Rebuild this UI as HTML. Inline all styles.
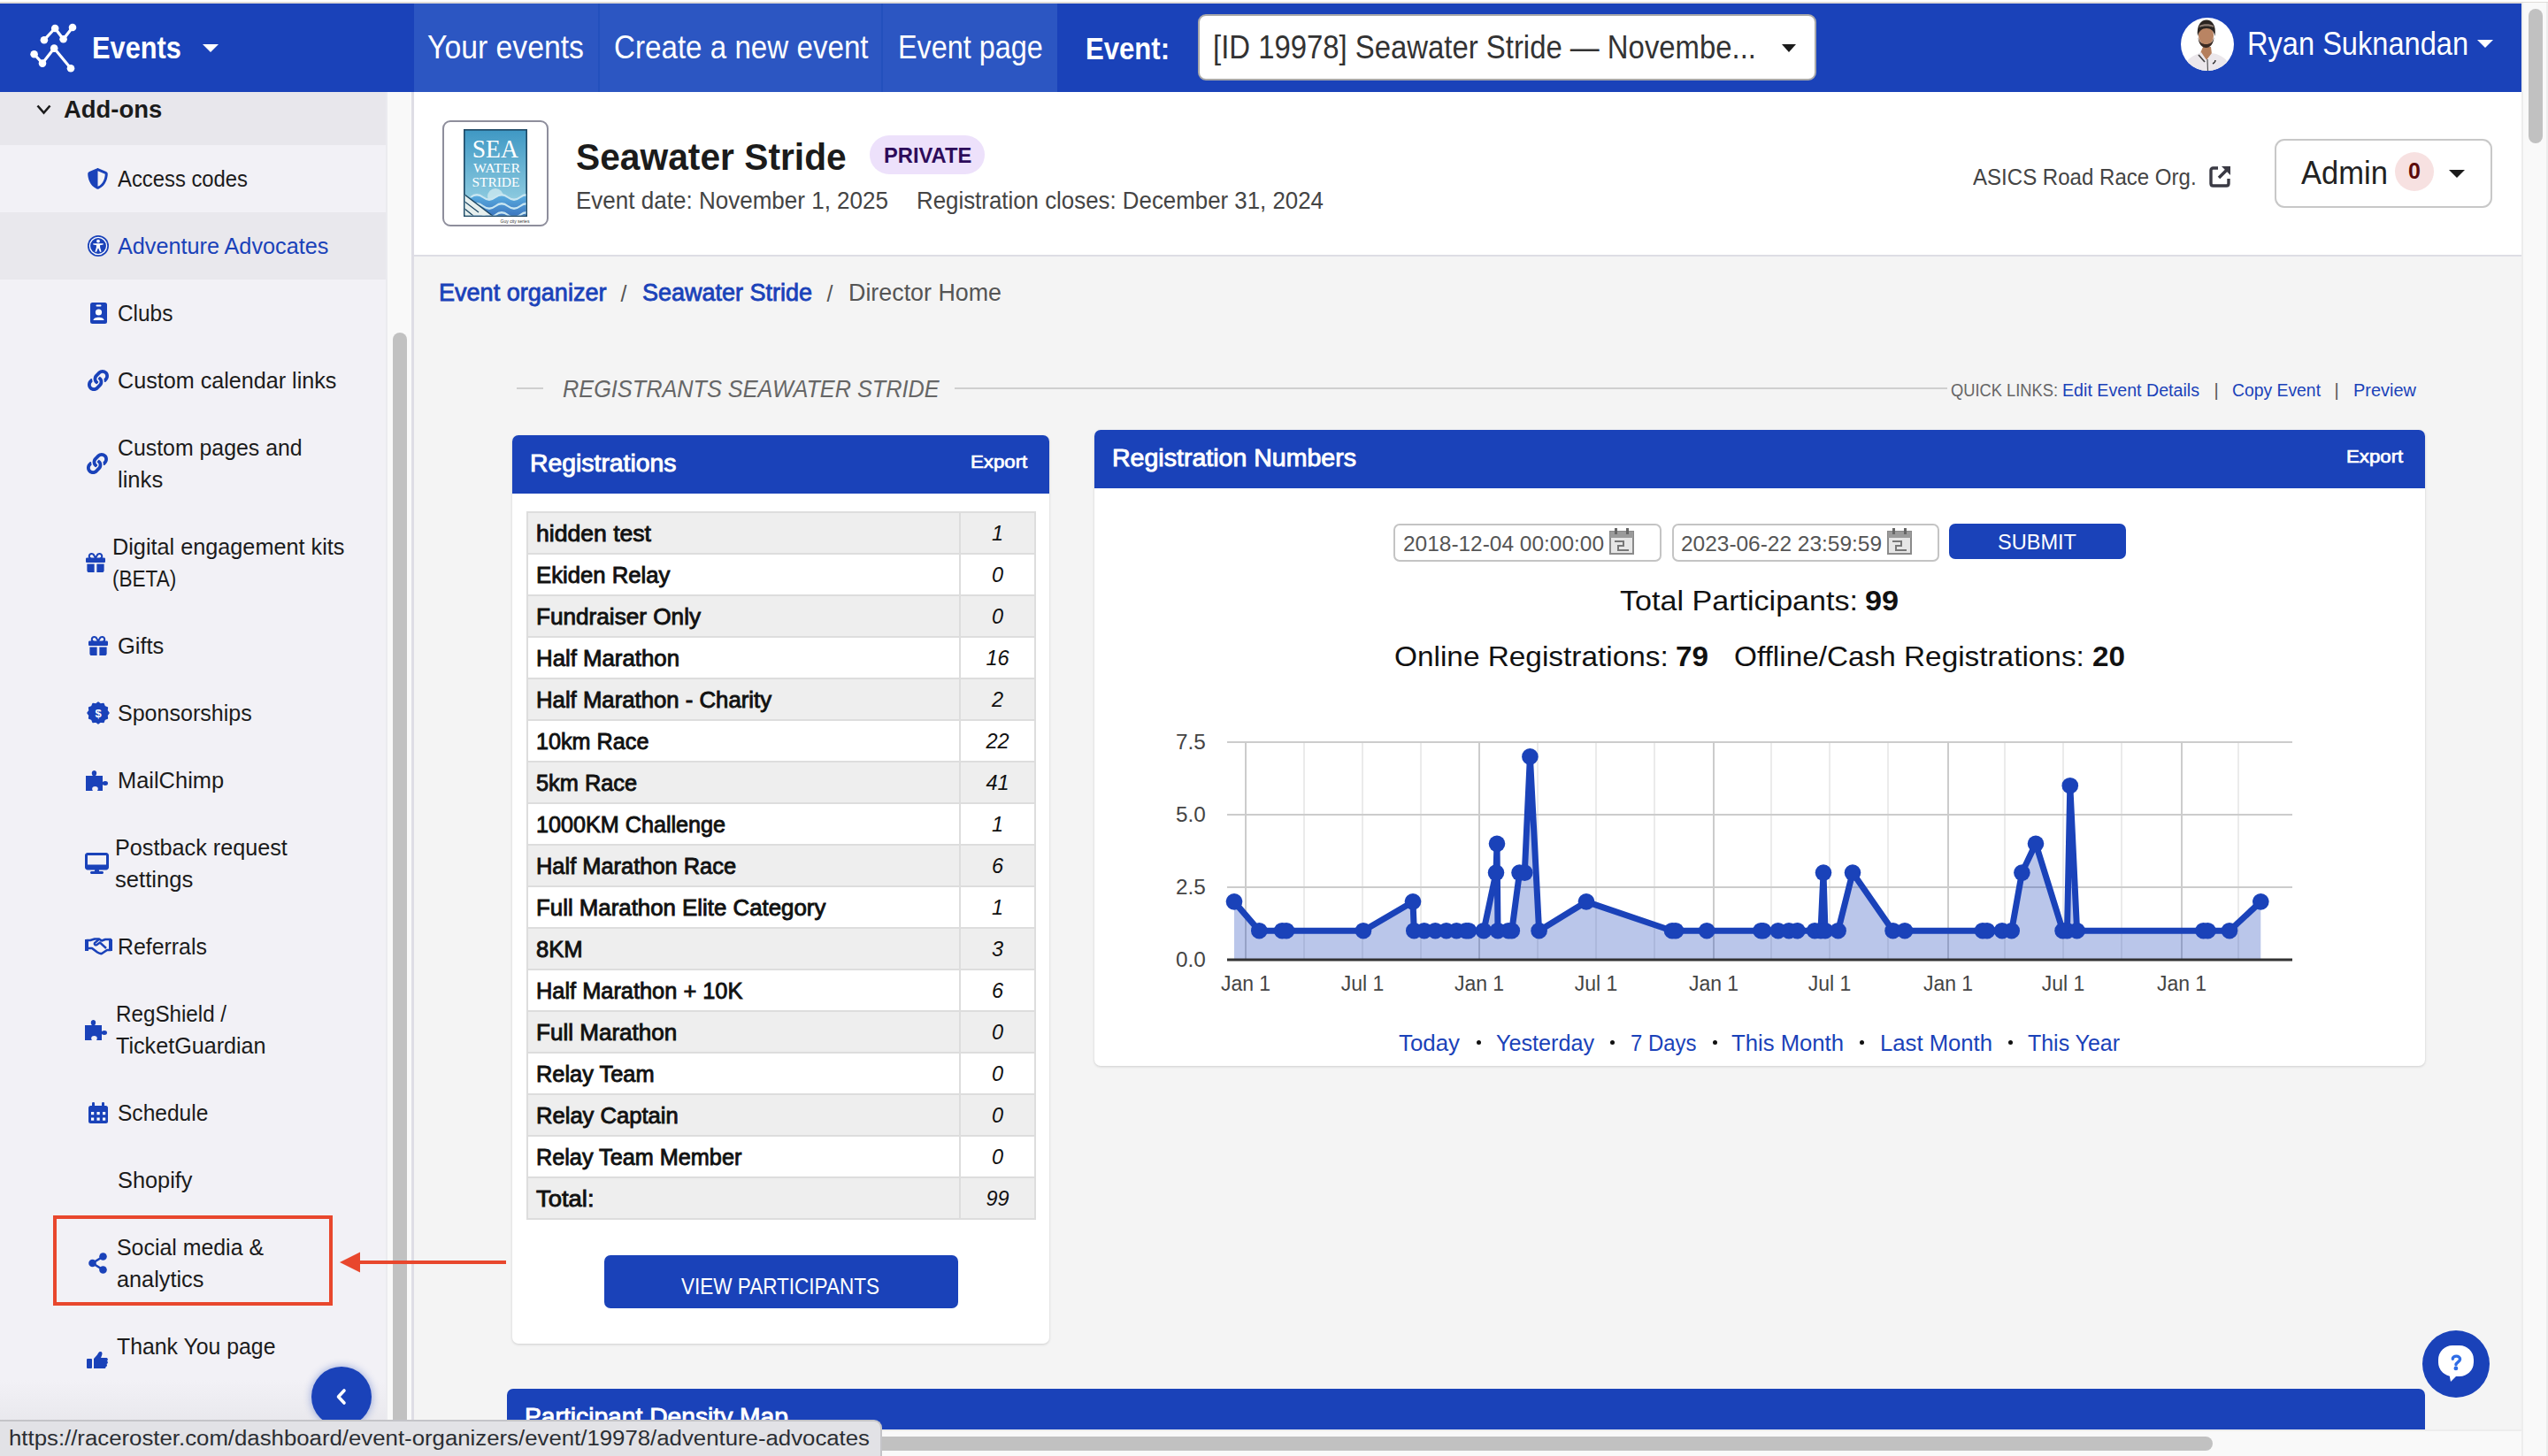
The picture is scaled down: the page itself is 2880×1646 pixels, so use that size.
<!DOCTYPE html>
<html><head><meta charset="utf-8">
<style>
*{box-sizing:border-box;margin:0;padding:0}
html,body{width:2880px;height:1646px;overflow:hidden;background:#f4f4f4;font-family:"Liberation Sans",sans-serif;color:#1b1b1b}
.a{position:absolute;white-space:nowrap}
svg{position:absolute;overflow:visible}
</style></head>
<body>
<div class="a" style="left:0px;top:0px;width:2880px;height:4px;background:#fff;border-bottom:2px solid #e0dcd8;"></div>
<div class="a" style="left:0px;top:4px;width:2850px;height:100px;background:#1a42b9;"></div>
<div class="a" style="left:468px;top:4px;width:727px;height:100px;background:#2c56c2;"></div>
<div class="a" style="left:676px;top:4px;width:2px;height:100px;background:#2350bd;"></div>
<div class="a" style="left:996px;top:4px;width:2px;height:100px;background:#2350bd;"></div>
<div class="a" style="left:2850px;top:3px;width:30px;height:1643px;background:#f9f9f9;border-left:2px solid #ededed;border-right:2px solid #ececec;"></div>
<div class="a" style="left:2858px;top:10px;width:16px;height:152px;background:#c1c1c1;border-radius:8px;"></div>
<div class="a" style="left:0px;top:104px;width:436px;height:1501px;background:#f2f1f6;"></div>
<div class="a" style="left:0px;top:104px;width:436px;height:60px;background:#e8e7ec;"></div>
<div class="a" style="left:0px;top:240px;width:436px;height:76px;background:#e9e8ed;"></div>
<div class="a" style="left:436px;top:104px;width:32px;height:1512px;background:#f9f9f9;border-right:3px solid #dedde5;border-left:2px solid #ebebef;"></div>
<div class="a" style="left:444px;top:376px;width:16px;height:1260px;background:#c1c1c1;border-radius:8px;"></div>
<svg style="left:0;top:0" width="120" height="104">
<g stroke="#fff" stroke-width="3.2" fill="none" stroke-linecap="round">
<polyline points="49.9,45.2 62.2,32 71.6,44.3 82,31"/>
<polyline points="38.6,61.2 48,71.6 61.2,54.6 80,77.2"/>
</g>
<g fill="#fff">
<circle cx="49.9" cy="45.2" r="4.3"/><circle cx="62.2" cy="32" r="4.3"/><circle cx="71.6" cy="44.3" r="4.3"/><circle cx="82" cy="31" r="4.3"/>
<circle cx="38.6" cy="61.2" r="4.3"/><circle cx="48" cy="71.6" r="4.3"/><circle cx="61.2" cy="54.6" r="4.3"/><circle cx="80" cy="77.2" r="4.3"/>
</g></svg>
<div class="a" style="left:103.6px;top:37.3px;font-size:34.5px;line-height:34.5px;color:#fff;font-weight:bold;transform:scaleX(0.8919);transform-origin:0 0;">Events</div>
<svg style="left:229px;top:50px" width="19" height="10"><polygon points="0,0 18,0 9,9" fill="#fff"/></svg>
<div class="a" style="left:483.0px;top:35.9px;font-size:36px;line-height:36px;color:#fff;transform:scaleX(0.9374);transform-origin:0 0;">Your events</div>
<div class="a" style="left:694.0px;top:35.9px;font-size:36px;line-height:36px;color:#fff;transform:scaleX(0.9212);transform-origin:0 0;">Create a new event</div>
<div class="a" style="left:1015.0px;top:35.9px;font-size:36px;line-height:36px;color:#fff;transform:scaleX(0.8992);transform-origin:0 0;">Event page</div>
<div class="a" style="left:1227.0px;top:36.8px;font-size:35px;line-height:35px;color:#fff;font-weight:bold;transform:scaleX(0.8882);transform-origin:0 0;">Event:</div>
<div class="a" style="left:1354px;top:16px;width:699px;height:75px;background:#fff;border:2px solid #a9a9a9;border-radius:9px;"></div>
<div class="a" style="left:1371.0px;top:35.9px;font-size:36px;line-height:36px;color:#333;transform:scaleX(0.9132);transform-origin:0 0;">[ID 19978] Seawater Stride — Novembe...</div>
<svg style="left:2014px;top:50px" width="17" height="10"><polygon points="0,0 16,0 8,9" fill="#1b1b1b"/></svg>
<svg style="left:2465px;top:20px" width="60" height="60">
<defs><clipPath id="av"><circle cx="30" cy="30" r="30"/></clipPath></defs>
<circle cx="30" cy="30" r="30" fill="#fff"/>
<g clip-path="url(#av)">
<path d="M22,40 L29,48 L35,41 L34,33 L25,33Z" fill="#b57f5c"/>
<path d="M3,62 C4,50 10,44 19,41 L23,39 L29,48 L35,40 L40,41 C49,44 56,50 57,62Z" fill="#ebe7eb"/>
<ellipse cx="28.5" cy="20" rx="8.6" ry="11" fill="#b98463"/>
<path d="M19.5,22 C20,30 24,34 28.5,34 C33,34 37,30 37.5,22 C36,28 33,30 28.5,30 C24,30 21,28 19.5,22Z" fill="#3a2a22"/>
<path d="M19,21 C17.5,8 23,2.5 29,2.5 C35,2.5 40.5,8 38.5,21 C37.5,15 34,12 29,12 C24,12 20.5,15 19,21Z" fill="#2a2420"/>
<path d="M21,9 C25,6.5 33,6.5 37,9 L37,11 C33,9 25,9 21,11Z" fill="#8a7a70"/>
<path d="M20,42 L27,50" stroke="#444" stroke-width="1.6"/>
<path d="M30,47 L30.5,60" stroke="#555" stroke-width="1.2"/>
<path d="M36,52 C38,51 39,49 39,48" stroke="#333" stroke-width="1.4" fill="none"/>
</g></svg>
<div class="a" style="left:2540.0px;top:31.5px;font-size:36px;line-height:36px;color:#fff;transform:scaleX(0.9052);transform-origin:0 0;">Ryan Suknandan</div>
<svg style="left:2800px;top:45px" width="19" height="10"><polygon points="0,0 18,0 9,9" fill="#fff"/></svg>
<svg style="left:41px;top:118px" width="18" height="12"><polyline points="1.5,1.5 8.5,9.5 15.5,1.5" fill="none" stroke="#1b1b1b" stroke-width="2.6"/></svg>
<div class="a" style="left:71.5px;top:110.3px;font-size:28px;line-height:28px;color:#1b1b1b;font-weight:bold;transform:scaleX(0.9803);transform-origin:0 0;">Add-ons</div>
<div class="a" style="left:133.0px;top:190.4px;font-size:25.5px;line-height:25.5px;color:#1b1b1b;transform:scaleX(0.9345);transform-origin:0 0;">Access codes</div>
<div class="a" style="left:133.0px;top:266.4px;font-size:25.5px;line-height:25.5px;color:#1a42b9;transform:scaleX(0.9888);transform-origin:0 0;">Adventure Advocates</div>
<div class="a" style="left:133.0px;top:342.4px;font-size:25.5px;line-height:25.5px;color:#1b1b1b;transform:scaleX(0.9570);transform-origin:0 0;">Clubs</div>
<div class="a" style="left:133.0px;top:418.4px;font-size:25.5px;line-height:25.5px;color:#1b1b1b;transform:scaleX(0.9863);transform-origin:0 0;">Custom calendar links</div>
<div class="a" style="left:132.5px;top:494.4px;font-size:25.5px;line-height:25.5px;color:#1b1b1b;transform:scaleX(0.9746);transform-origin:0 0;">Custom pages and</div>
<div class="a" style="left:132.5px;top:530.0px;font-size:25.5px;line-height:25.5px;color:#1b1b1b;transform:scaleX(1.0034);transform-origin:0 0;">links</div>
<div class="a" style="left:127.3px;top:606.4px;font-size:25.5px;line-height:25.5px;color:#1b1b1b;transform:scaleX(0.9899);transform-origin:0 0;">Digital engagement kits</div>
<div class="a" style="left:127.3px;top:642.0px;font-size:25.5px;line-height:25.5px;color:#1b1b1b;transform:scaleX(0.8849);transform-origin:0 0;">(BETA)</div>
<div class="a" style="left:133.0px;top:718.4px;font-size:25.5px;line-height:25.5px;color:#1b1b1b;transform:scaleX(0.9976);transform-origin:0 0;">Gifts</div>
<div class="a" style="left:133.0px;top:794.4px;font-size:25.5px;line-height:25.5px;color:#1b1b1b;transform:scaleX(0.9818);transform-origin:0 0;">Sponsorships</div>
<div class="a" style="left:133.0px;top:870.4px;font-size:25.5px;line-height:25.5px;color:#1b1b1b;transform:scaleX(0.9972);transform-origin:0 0;">MailChimp</div>
<div class="a" style="left:130.3px;top:946.4px;font-size:25.5px;line-height:25.5px;color:#1b1b1b;transform:scaleX(0.9891);transform-origin:0 0;">Postback request</div>
<div class="a" style="left:130.3px;top:982.0px;font-size:25.5px;line-height:25.5px;color:#1b1b1b;transform:scaleX(1.0049);transform-origin:0 0;">settings</div>
<div class="a" style="left:133.0px;top:1058.4px;font-size:25.5px;line-height:25.5px;color:#1b1b1b;transform:scaleX(0.9753);transform-origin:0 0;">Referrals</div>
<div class="a" style="left:130.9px;top:1134.4px;font-size:25.5px;line-height:25.5px;color:#1b1b1b;transform:scaleX(0.9489);transform-origin:0 0;">RegShield /</div>
<div class="a" style="left:130.9px;top:1170.0px;font-size:25.5px;line-height:25.5px;color:#1b1b1b;transform:scaleX(0.9862);transform-origin:0 0;">TicketGuardian</div>
<div class="a" style="left:133.0px;top:1246.4px;font-size:25.5px;line-height:25.5px;color:#1b1b1b;transform:scaleX(0.9621);transform-origin:0 0;">Schedule</div>
<div class="a" style="left:133.0px;top:1322.4px;font-size:25.5px;line-height:25.5px;color:#1b1b1b;transform:scaleX(0.9936);transform-origin:0 0;">Shopify</div>
<div class="a" style="left:132.0px;top:1398.4px;font-size:25.5px;line-height:25.5px;color:#1b1b1b;transform:scaleX(0.9760);transform-origin:0 0;">Social media &amp;</div>
<div class="a" style="left:132.0px;top:1434.0px;font-size:25.5px;line-height:25.5px;color:#1b1b1b;transform:scaleX(0.9907);transform-origin:0 0;">analytics</div>
<div class="a" style="left:131.6px;top:1510.4px;font-size:25.5px;line-height:25.5px;color:#1b1b1b;transform:scaleX(0.9737);transform-origin:0 0;">Thank You page</div>
<svg style="left:99px;top:190px" width="23" height="24" viewBox="16 0 480 512"><path fill="#1a42b9" d="M256 0c4.6 0 9.2 1 13.4 2.9L457.7 82.8c22 9.3 38.4 31 38.3 57.2c-.5 99.2-41.3 280.7-213.6 363.2c-16.7 8-36.1 8-52.8 0C57.3 420.7 16.5 239.2 16 140c-.1-26.2 16.3-47.9 38.3-57.2L242.7 2.9C246.8 1 251.4 0 256 0zm0 66.8V444.8C394 378 431.1 230.1 432 141.4L256 66.8z"/></svg>
<svg style="left:99px;top:266px" width="24" height="24" viewBox="0 0 24 24"><circle cx="12" cy="12" r="12" fill="#1a42b9"/><circle cx="12" cy="12" r="9.6" fill="none" stroke="#fff" stroke-width="1.3"/><circle cx="12" cy="6.6" r="1.9" fill="#fff"/><path d="M6.3 9.2 L17.7 9.2 L17.7 10.6 L14 11.3 L14.2 14 L15.6 18.6 L14 19.1 L12.3 14.8 L11.7 14.8 L10 19.1 L8.4 18.6 L9.8 14 L10 11.3 L6.3 10.6Z" fill="#fff"/></svg>
<svg style="left:101.5px;top:342px" width="19" height="24" viewBox="0 0 19 24"><rect x="0" y="0" width="19" height="24" rx="2.5" fill="#1a42b9"/><rect x="6.5" y="2.5" width="6" height="2" rx="1" fill="#fff"/><circle cx="9.5" cy="11" r="3.6" fill="#fff"/><path d="M3.5 20 C3.5 15.5 15.5 15.5 15.5 20Z" fill="#fff"/></svg>
<svg style="left:99px;top:418px" width="24" height="24" viewBox="0 0 512 512"><path fill="#1a42b9" d="M326.612 185.391c59.747 59.809 58.927 155.698.36 214.59-.11.12-.24.25-.36.37l-67.2 67.2c-59.27 59.27-155.699 59.262-214.96 0-59.27-59.26-59.27-155.7 0-214.96l37.106-37.106c9.84-9.84 26.786-3.3 27.294 10.606.648 17.722 3.826 35.527 9.69 52.721 1.986 5.822.567 12.262-3.783 16.612l-13.087 13.087c-28.026 28.026-28.905 73.66-1.155 101.96 28.024 28.579 74.086 28.749 102.325.51l67.2-67.19c28.191-28.191 28.073-73.757 0-101.83-3.701-3.694-7.429-6.564-10.341-8.569a16.037 16.037 0 0 1-6.947-12.606c-.396-10.567 3.348-21.456 11.698-29.806l21.054-21.055c5.521-5.521 14.182-6.199 20.584-1.731a152.482 152.482 0 0 1 20.522 17.197zM467.547 44.449c-59.261-59.262-155.69-59.27-214.96 0l-67.2 67.2c-.12.12-.25.25-.36.37-58.566 58.892-59.387 154.781.36 214.59a152.454 152.454 0 0 0 20.521 17.196c6.402 4.468 15.064 3.789 20.584-1.731l21.054-21.055c8.35-8.35 12.094-19.239 11.698-29.806a16.037 16.037 0 0 0-6.947-12.606c-2.912-2.005-6.64-4.875-10.341-8.569-28.073-28.073-28.191-73.639 0-101.83l67.2-67.19c28.239-28.239 74.3-28.069 102.325.51 27.75 28.3 26.872 73.934-1.155 101.96l-13.087 13.087c-4.35 4.35-5.769 10.79-3.783 16.612 5.864 17.194 9.042 34.999 9.69 52.721.509 13.906 17.454 20.446 27.294 10.606l37.106-37.106c59.271-59.259 59.271-155.699.001-214.959z"/></svg>
<svg style="left:98px;top:512px" width="24" height="24" viewBox="0 0 512 512"><path fill="#1a42b9" d="M326.612 185.391c59.747 59.809 58.927 155.698.36 214.59-.11.12-.24.25-.36.37l-67.2 67.2c-59.27 59.27-155.699 59.262-214.96 0-59.27-59.26-59.27-155.7 0-214.96l37.106-37.106c9.84-9.84 26.786-3.3 27.294 10.606.648 17.722 3.826 35.527 9.69 52.721 1.986 5.822.567 12.262-3.783 16.612l-13.087 13.087c-28.026 28.026-28.905 73.66-1.155 101.96 28.024 28.579 74.086 28.749 102.325.51l67.2-67.19c28.191-28.191 28.073-73.757 0-101.83-3.701-3.694-7.429-6.564-10.341-8.569a16.037 16.037 0 0 1-6.947-12.606c-.396-10.567 3.348-21.456 11.698-29.806l21.054-21.055c5.521-5.521 14.182-6.199 20.584-1.731a152.482 152.482 0 0 1 20.522 17.197zM467.547 44.449c-59.261-59.262-155.69-59.27-214.96 0l-67.2 67.2c-.12.12-.25.25-.36.37-58.566 58.892-59.387 154.781.36 214.59a152.454 152.454 0 0 0 20.521 17.196c6.402 4.468 15.064 3.789 20.584-1.731l21.054-21.055c8.35-8.35 12.094-19.239 11.698-29.806a16.037 16.037 0 0 0-6.947-12.606c-2.912-2.005-6.64-4.875-10.341-8.569-28.073-28.073-28.191-73.639 0-101.83l67.2-67.19c28.239-28.239 74.3-28.069 102.325.51 27.75 28.3 26.872 73.934-1.155 101.96l-13.087 13.087c-4.35 4.35-5.769 10.79-3.783 16.612 5.864 17.194 9.042 34.999 9.69 52.721.509 13.906 17.454 20.446 27.294 10.606l37.106-37.106c59.271-59.259 59.271-155.699.001-214.959z"/></svg>
<svg style="left:96px;top:625px" width="24" height="22" viewBox="0 0 512 512"><path fill="#1a42b9" d="M190.5 68.8L225.3 128H152c-22.1 0-40-17.9-40-40s17.9-40 40-40h2.2c14.9 0 28.8 7.9 36.3 20.8zM64 88c0 14.4 3.5 28 9.6 40H32c-17.7 0-32 14.3-32 32v64c0 17.7 14.3 32 32 32H480c17.7 0 32-14.3 32-32V160c0-17.7-14.3-32-32-32H438.4c6.1-12 9.6-25.6 9.6-40c0-48.6-39.4-88-88-88h-2.2c-31.9 0-61.5 16.9-77.7 44.4L256 85.5l-24.1-41C215.7 16.9 186.1 0 154.2 0H152C103.4 0 64 39.4 64 88zm336 0c0 22.1-17.9 40-40 40H286.7l34.8-59.2C329.1 55.9 342.9 48 357.8 48H360c22.1 0 40 17.9 40 40zM32 288V464c0 26.5 21.5 48 48 48H224V288H32zM288 512H432c26.5 0 48-21.5 48-48V288H288V512z"/></svg>
<svg style="left:99px;top:719px" width="24" height="22" viewBox="0 0 512 512"><path fill="#1a42b9" d="M190.5 68.8L225.3 128H152c-22.1 0-40-17.9-40-40s17.9-40 40-40h2.2c14.9 0 28.8 7.9 36.3 20.8zM64 88c0 14.4 3.5 28 9.6 40H32c-17.7 0-32 14.3-32 32v64c0 17.7 14.3 32 32 32H480c17.7 0 32-14.3 32-32V160c0-17.7-14.3-32-32-32H438.4c6.1-12 9.6-25.6 9.6-40c0-48.6-39.4-88-88-88h-2.2c-31.9 0-61.5 16.9-77.7 44.4L256 85.5l-24.1-41C215.7 16.9 186.1 0 154.2 0H152C103.4 0 64 39.4 64 88zm336 0c0 22.1-17.9 40-40 40H286.7l34.8-59.2C329.1 55.9 342.9 48 357.8 48H360c22.1 0 40 17.9 40 40zM32 288V464c0 26.5 21.5 48 48 48H224V288H32zM288 512H432c26.5 0 48-21.5 48-48V288H288V512z"/></svg>
<svg style="left:99px;top:794px" width="24" height="24" viewBox="0 0 24 24"><polygon points="24.00,12.00 21.95,14.67 22.39,18.00 19.28,19.28 18.00,22.39 14.67,21.95 12.00,24.00 9.33,21.95 6.00,22.39 4.72,19.28 1.61,18.00 2.05,14.67 0.00,12.00 2.05,9.33 1.61,6.00 4.72,4.72 6.00,1.61 9.33,2.05 12.00,0.00 14.67,2.05 18.00,1.61 19.28,4.72 22.39,6.00 21.95,9.33" fill="#1a42b9" stroke="#1a42b9" stroke-width="1.5" stroke-linejoin="round"/><text x="12" y="17" text-anchor="middle" font-family="Liberation Sans" font-weight="bold" font-size="13" fill="#fff">$</text></svg>
<svg style="left:97px;top:870px" width="25" height="25" viewBox="0 0 25 25"><path fill="#1a42b9" d="M0 7 H8 C6 5 6.5 1 9.5 1 C12.5 1 13 5 11 7 H19 V14 C21 12.5 25 12.5 25 15.5 C25 18.5 21 18.5 19 17 V24 H13 C14.5 22 14 19 10.5 19 C7 19 6.5 22 8 24 H0Z"/></svg>
<svg style="left:96px;top:1152px" width="25" height="25" viewBox="0 0 25 25"><path fill="#1a42b9" d="M0 7 H8 C6 5 6.5 1 9.5 1 C12.5 1 13 5 11 7 H19 V14 C21 12.5 25 12.5 25 15.5 C25 18.5 21 18.5 19 17 V24 H13 C14.5 22 14 19 10.5 19 C7 19 6.5 22 8 24 H0Z"/></svg>
<svg style="left:96px;top:964px" width="27" height="24" viewBox="0 0 576 512"><path fill="#1a42b9" d="M64 0C28.7 0 0 28.7 0 64V352c0 35.3 28.7 64 64 64H240l-10.7 32H160c-17.7 0-32 14.3-32 32s14.3 32 32 32H416c17.7 0 32-14.3 32-32s-14.3-32-32-32H346.7L336 416H512c35.3 0 64-28.7 64-64V64c0-35.3-28.7-64-64-64H64zM512 64V288H64V64H512z"/></svg>
<svg style="left:95.6px;top:1060px" width="31" height="19" viewBox="0 0 31 19"><path fill="none" stroke="#1a42b9" stroke-width="2.6" stroke-linejoin="round" d="M2 3 H6 L11 1.5 H16 L19 3.5 L23 2 H29 V14 H25 L19 18 C17 18.5 15.5 17.5 14 16.5 L8 12 H2Z"/><path fill="none" stroke="#1a42b9" stroke-width="2.4" d="M16 1.8 L11 6 C10 7.5 12 9 13.5 8 L17 5.5 L24 12"/><rect x="0" y="2" width="4" height="13" fill="#1a42b9"/><rect x="27" y="2" width="4" height="13" fill="#1a42b9"/></svg>
<svg style="left:100px;top:1246px" width="22" height="24" viewBox="0 0 22 24"><rect x="0" y="4" width="22" height="20" rx="2.5" fill="#1a42b9"/><rect x="4" y="0" width="3" height="6" rx="1.3" fill="#1a42b9"/><rect x="15" y="0" width="3" height="6" rx="1.3" fill="#1a42b9"/><rect x="3" y="11" width="3.2" height="3.2" fill="#fff"/><rect x="3" y="17.5" width="3.2" height="3.2" fill="#fff"/><rect x="9.5" y="11" width="3.2" height="3.2" fill="#fff"/><rect x="9.5" y="17.5" width="3.2" height="3.2" fill="#fff"/><rect x="16" y="11" width="3.2" height="3.2" fill="#fff"/><rect x="16" y="17.5" width="3.2" height="3.2" fill="#fff"/></svg>
<svg style="left:100px;top:1416px" width="21" height="24" viewBox="0 0 21 24"><g fill="#1a42b9"><circle cx="16.5" cy="4.5" r="4.3"/><circle cx="4.5" cy="12" r="4.3"/><circle cx="16.5" cy="19.5" r="4.3"/></g><path d="M16.5 4.5 L4.5 12 L16.5 19.5" fill="none" stroke="#1a42b9" stroke-width="2.6"/></svg>
<svg style="left:98px;top:1528px" width="24" height="19" viewBox="0 0 24 19"><rect x="0" y="8" width="6" height="11" rx="1" fill="#1a42b9"/><path fill="#1a42b9" d="M8 8 L12 3.5 C13 2 13.5 0 15.5 0 C17.5 0 18 2 17 4.5 L16 7 H22 C24 7 24.5 9.5 23 10.5 C24.5 11.5 24 13.5 22.5 14 C23.5 15 23 17 21.5 17.2 C21.8 18.4 21 19 20 19 H8Z"/></svg>
<div class="a" style="left:468px;top:104px;width:2382px;height:186px;background:#fff;border-bottom:2px solid #dddde4;"></div>
<div class="a" style="left:500px;top:136px;width:120px;height:120px;background:#fff;border:2px solid #8e8e9c;border-radius:9px;"></div>
<svg style="left:524px;top:146px" width="72" height="108" viewBox="0 0 72 108">
<defs><linearGradient id="lg" x1="0" y1="0" x2="0" y2="1"><stop offset="0" stop-color="#3f98c4"/><stop offset="0.75" stop-color="#86c6dd"/><stop offset="1" stop-color="#b5dde6"/></linearGradient></defs>
<rect x="0.8" y="0.8" width="70.4" height="97.4" fill="url(#lg)" stroke="#1d4763" stroke-width="1.6"/>
<text x="9.8" y="32.3" textLength="52" lengthAdjust="spacingAndGlyphs" font-family="Liberation Serif" font-size="29" fill="#fff">SEA</text>
<text x="11" y="49.3" textLength="53" lengthAdjust="spacingAndGlyphs" font-family="Liberation Serif" font-size="14.8" fill="#fff">WATER</text>
<text x="9.4" y="65.4" textLength="54" lengthAdjust="spacingAndGlyphs" font-family="Liberation Serif" font-size="14.8" fill="#fff">STRIDE</text>
<defs><clipPath id="lc"><rect x="1.6" y="1.6" width="68.8" height="95.8"/></clipPath><linearGradient id="wg" x1="0" y1="0" x2="0" y2="1"><stop offset="0" stop-color="#5aaee0"/><stop offset="1" stop-color="#3a72bd"/></linearGradient></defs>
<g clip-path="url(#lc)">
<circle cx="36" cy="76" r="9" fill="#d6eef2" opacity="0.7"/>
<path d="M8 77 q7 -5.5 14 0 t14 0 t14 0 t14 0 t14 0 V100 H8Z" fill="url(#wg)"/>
<path d="M8 77 q7 -5.5 14 0 t14 0 t14 0 t14 0 t14 0" fill="none" stroke="#c9e6f1" stroke-width="2.2"/>
<path d="M8 87 q7 -5.5 14 0 t14 0 t14 0 t14 0 t14 0" fill="none" stroke="#c9e6f1" stroke-width="2.2"/>
<path d="M8 97 q7 -5.5 14 0 t14 0 t14 0 t14 0 t14 0" fill="none" stroke="#c9e6f1" stroke-width="2.2"/>
<path d="M0 73 L34 99 L0 99Z" fill="#e6efee" stroke="#1d4763" stroke-width="1.4"/>
<path d="M0 81 L17 94 M0 89 L11 98" stroke="#1d4763" stroke-width="1.3"/>
</g>
<text x="58" y="106" text-anchor="middle" font-family="Liberation Sans" font-size="5" fill="#333">Guy city series</text>
</svg>
<div class="a" style="left:651.0px;top:155.6px;font-size:43px;line-height:43px;color:#1b1b1b;font-weight:bold;transform:scaleX(0.9475);transform-origin:0 0;">Seawater Stride</div>
<div class="a" style="left:983px;top:153px;width:130px;height:44px;background:#ede1fb;border-radius:22px;"></div>
<div class="a" style="left:998.7px;top:164.3px;font-size:24.5px;line-height:24.5px;color:#2d0b5a;font-weight:bold;transform:scaleX(0.9682);transform-origin:0 0;">PRIVATE</div>
<div class="a" style="left:651.0px;top:211.9px;font-size:28.5px;line-height:28.5px;color:#444;transform:scaleX(0.9131);transform-origin:0 0;">Event date: November 1, 2025</div>
<div class="a" style="left:1036.0px;top:211.9px;font-size:28.5px;line-height:28.5px;color:#444;transform:scaleX(0.9074);transform-origin:0 0;">Registration closes: December 31, 2024</div>
<div class="a" style="left:2230.0px;top:186.5px;font-size:26px;line-height:26px;color:#444;transform:scaleX(0.9249);transform-origin:0 0;">ASICS Road Race Org.</div>
<svg style="left:2497px;top:186px" width="26" height="26" viewBox="0 0 26 26"><path d="M10 4 H4.5 C3 4 2 5 2 6.5 V21.5 C2 23 3 24 4.5 24 H19.5 C21 24 22 23 22 21.5 V16" fill="none" stroke="#3a3a44" stroke-width="3.4"/><path d="M14 2 H24 V12 Z" fill="#3a3a44"/><path d="M22 4 L11 15" stroke="#3a3a44" stroke-width="3.6"/></svg>
<div class="a" style="left:2571px;top:157px;width:246px;height:78px;background:#fff;border:2px solid #c8c8c8;border-radius:11px;"></div>
<div class="a" style="left:2601.0px;top:178.0px;font-size:36px;line-height:36px;color:#222;transform:scaleX(0.9602);transform-origin:0 0;">Admin</div>
<div class="a" style="left:2707px;top:172px;width:44px;height:44px;border-radius:22px;background:#f7e1e1"></div>
<div class="a" style="left:2722.1px;top:180.8px;font-size:25px;line-height:25px;color:#5c0b0b;font-weight:bold;">0</div>
<svg style="left:2768px;top:192px" width="19" height="10"><polygon points="0,0 18,0 9,9" fill="#1b1b1b"/></svg>
<div class="a" style="left:496.0px;top:318.1px;font-size:27px;line-height:27px;color:#1a42b9;transform:scaleX(1.0021);transform-origin:0 0;-webkit-text-stroke:0.8px #1a42b9;">Event organizer</div>
<div class="a" style="left:701.5px;top:319.8px;font-size:25px;line-height:25px;color:#555;">/</div>
<div class="a" style="left:726.0px;top:318.1px;font-size:27px;line-height:27px;color:#1a42b9;-webkit-text-stroke:0.8px #1a42b9;">Seawater Stride</div>
<div class="a" style="left:934.5px;top:319.8px;font-size:25px;line-height:25px;color:#555;">/</div>
<div class="a" style="left:959.0px;top:318.1px;font-size:27px;line-height:27px;color:#555;transform:scaleX(0.9940);transform-origin:0 0;">Director Home</div>
<div class="a" style="left:584px;top:438px;width:30px;height:2px;background:#cfcfcf;"></div>
<div class="a" style="left:636.0px;top:426.3px;font-size:28px;line-height:28px;color:#666;font-style:italic;transform:scaleX(0.9031);transform-origin:0 0;">REGISTRANTS SEAWATER STRIDE</div>
<div class="a" style="left:1079px;top:438px;width:1122px;height:2px;background:#cfcfcf;"></div>
<div class="a" style="left:2205.0px;top:431.5px;font-size:19.5px;line-height:19.5px;color:#666;transform:scaleX(0.9383);transform-origin:0 0;">QUICK LINKS:</div>
<div class="a" style="left:2331.0px;top:431.5px;font-size:19.5px;line-height:19.5px;color:#1a42b9;transform:scaleX(1.0071);transform-origin:0 0;">Edit Event Details</div>
<div class="a" style="left:2502.4px;top:431.1px;font-size:20px;line-height:20px;color:#555;">|</div>
<div class="a" style="left:2523.0px;top:431.5px;font-size:19.5px;line-height:19.5px;color:#1a42b9;transform:scaleX(0.9921);transform-origin:0 0;">Copy Event</div>
<div class="a" style="left:2638.4px;top:431.1px;font-size:20px;line-height:20px;color:#555;">|</div>
<div class="a" style="left:2660.0px;top:431.5px;font-size:19.5px;line-height:19.5px;color:#1a42b9;transform:scaleX(1.0228);transform-origin:0 0;">Preview</div>
<div class="a" style="left:579px;top:492px;width:607px;height:1027px;background:#fff;border-radius:7px;box-shadow:0 1px 3px rgba(0,0,0,0.16);"></div>
<div class="a" style="left:579px;top:492px;width:607px;height:66px;background:#1a42b9;border-radius:7px 7px 0 0;"></div>
<div class="a" style="left:599.0px;top:511.1px;font-size:27px;line-height:27px;color:#fff;transform:scaleX(1.0503);transform-origin:0 0;-webkit-text-stroke:0.9px #fff;">Registrations</div>
<div class="a" style="left:1096.7px;top:511.6px;font-size:20.5px;line-height:20.5px;color:#fff;transform:scaleX(1.0853);transform-origin:0 0;-webkit-text-stroke:0.7px #fff;">Export</div>
<div class="a" style="left:595px;top:578px;width:576px;height:801px;background:#ddd;"></div>
<div class="a" style="left:597px;top:580px;width:487px;height:45px;background:#eeeeee;"></div>
<div class="a" style="left:1086px;top:580px;width:83px;height:45px;background:#eeeeee;"></div>
<div class="a" style="left:606.0px;top:590.0px;font-size:26px;line-height:26px;color:#111;transform:scaleX(1.0220);transform-origin:0 0;-webkit-text-stroke:0.9px #111;">hidden test</div>
<div class="a" style="left:1121.0px;top:592.1px;font-size:23.5px;line-height:23.5px;color:#111;font-style:italic;">1</div>
<div class="a" style="left:597px;top:627px;width:487px;height:45px;background:#ffffff;"></div>
<div class="a" style="left:1086px;top:627px;width:83px;height:45px;background:#ffffff;"></div>
<div class="a" style="left:606.0px;top:637.0px;font-size:26px;line-height:26px;color:#111;transform:scaleX(0.9883);transform-origin:0 0;-webkit-text-stroke:0.9px #111;">Ekiden Relay</div>
<div class="a" style="left:1121.0px;top:639.1px;font-size:23.5px;line-height:23.5px;color:#111;font-style:italic;">0</div>
<div class="a" style="left:597px;top:674px;width:487px;height:45px;background:#eeeeee;"></div>
<div class="a" style="left:1086px;top:674px;width:83px;height:45px;background:#eeeeee;"></div>
<div class="a" style="left:606.0px;top:684.0px;font-size:26px;line-height:26px;color:#111;transform:scaleX(1.0058);transform-origin:0 0;-webkit-text-stroke:0.9px #111;">Fundraiser Only</div>
<div class="a" style="left:1121.0px;top:686.1px;font-size:23.5px;line-height:23.5px;color:#111;font-style:italic;">0</div>
<div class="a" style="left:597px;top:721px;width:487px;height:45px;background:#ffffff;"></div>
<div class="a" style="left:1086px;top:721px;width:83px;height:45px;background:#ffffff;"></div>
<div class="a" style="left:606.0px;top:731.0px;font-size:26px;line-height:26px;color:#111;transform:scaleX(0.9921);transform-origin:0 0;-webkit-text-stroke:0.9px #111;">Half Marathon</div>
<div class="a" style="left:1114.4px;top:733.1px;font-size:23.5px;line-height:23.5px;color:#111;font-style:italic;">16</div>
<div class="a" style="left:597px;top:768px;width:487px;height:45px;background:#eeeeee;"></div>
<div class="a" style="left:1086px;top:768px;width:83px;height:45px;background:#eeeeee;"></div>
<div class="a" style="left:606.0px;top:778.0px;font-size:26px;line-height:26px;color:#111;transform:scaleX(0.9898);transform-origin:0 0;-webkit-text-stroke:0.9px #111;">Half Marathon - Charity</div>
<div class="a" style="left:1121.0px;top:780.1px;font-size:23.5px;line-height:23.5px;color:#111;font-style:italic;">2</div>
<div class="a" style="left:597px;top:815px;width:487px;height:45px;background:#ffffff;"></div>
<div class="a" style="left:1086px;top:815px;width:83px;height:45px;background:#ffffff;"></div>
<div class="a" style="left:606.0px;top:825.0px;font-size:26px;line-height:26px;color:#111;transform:scaleX(0.9689);transform-origin:0 0;-webkit-text-stroke:0.9px #111;">10km Race</div>
<div class="a" style="left:1114.5px;top:827.1px;font-size:23.5px;line-height:23.5px;color:#111;font-style:italic;">22</div>
<div class="a" style="left:597px;top:862px;width:487px;height:45px;background:#eeeeee;"></div>
<div class="a" style="left:1086px;top:862px;width:83px;height:45px;background:#eeeeee;"></div>
<div class="a" style="left:606.0px;top:872.0px;font-size:26px;line-height:26px;color:#111;transform:scaleX(0.9748);transform-origin:0 0;-webkit-text-stroke:0.9px #111;">5km Race</div>
<div class="a" style="left:1114.4px;top:874.1px;font-size:23.5px;line-height:23.5px;color:#111;font-style:italic;">41</div>
<div class="a" style="left:597px;top:909px;width:487px;height:45px;background:#ffffff;"></div>
<div class="a" style="left:1086px;top:909px;width:83px;height:45px;background:#ffffff;"></div>
<div class="a" style="left:606.0px;top:919.0px;font-size:26px;line-height:26px;color:#111;transform:scaleX(0.9679);transform-origin:0 0;-webkit-text-stroke:0.9px #111;">1000KM Challenge</div>
<div class="a" style="left:1121.0px;top:921.1px;font-size:23.5px;line-height:23.5px;color:#111;font-style:italic;">1</div>
<div class="a" style="left:597px;top:956px;width:487px;height:45px;background:#eeeeee;"></div>
<div class="a" style="left:1086px;top:956px;width:83px;height:45px;background:#eeeeee;"></div>
<div class="a" style="left:606.0px;top:966.0px;font-size:26px;line-height:26px;color:#111;transform:scaleX(0.9777);transform-origin:0 0;-webkit-text-stroke:0.9px #111;">Half Marathon Race</div>
<div class="a" style="left:1121.0px;top:968.1px;font-size:23.5px;line-height:23.5px;color:#111;font-style:italic;">6</div>
<div class="a" style="left:597px;top:1003px;width:487px;height:45px;background:#ffffff;"></div>
<div class="a" style="left:1086px;top:1003px;width:83px;height:45px;background:#ffffff;"></div>
<div class="a" style="left:606.0px;top:1013.0px;font-size:26px;line-height:26px;color:#111;transform:scaleX(0.9936);transform-origin:0 0;-webkit-text-stroke:0.9px #111;">Full Marathon Elite Category</div>
<div class="a" style="left:1121.0px;top:1015.1px;font-size:23.5px;line-height:23.5px;color:#111;font-style:italic;">1</div>
<div class="a" style="left:597px;top:1050px;width:487px;height:45px;background:#eeeeee;"></div>
<div class="a" style="left:1086px;top:1050px;width:83px;height:45px;background:#eeeeee;"></div>
<div class="a" style="left:606.0px;top:1060.0px;font-size:26px;line-height:26px;color:#111;transform:scaleX(0.9852);transform-origin:0 0;-webkit-text-stroke:0.9px #111;">8KM</div>
<div class="a" style="left:1121.0px;top:1062.1px;font-size:23.5px;line-height:23.5px;color:#111;font-style:italic;">3</div>
<div class="a" style="left:597px;top:1097px;width:487px;height:45px;background:#ffffff;"></div>
<div class="a" style="left:1086px;top:1097px;width:83px;height:45px;background:#ffffff;"></div>
<div class="a" style="left:606.0px;top:1107.0px;font-size:26px;line-height:26px;color:#111;transform:scaleX(0.9757);transform-origin:0 0;-webkit-text-stroke:0.9px #111;">Half Marathon + 10K</div>
<div class="a" style="left:1121.0px;top:1109.1px;font-size:23.5px;line-height:23.5px;color:#111;font-style:italic;">6</div>
<div class="a" style="left:597px;top:1144px;width:487px;height:45px;background:#eeeeee;"></div>
<div class="a" style="left:1086px;top:1144px;width:83px;height:45px;background:#eeeeee;"></div>
<div class="a" style="left:606.0px;top:1154.0px;font-size:26px;line-height:26px;color:#111;transform:scaleX(1.0022);transform-origin:0 0;-webkit-text-stroke:0.9px #111;">Full Marathon</div>
<div class="a" style="left:1121.0px;top:1156.1px;font-size:23.5px;line-height:23.5px;color:#111;font-style:italic;">0</div>
<div class="a" style="left:597px;top:1191px;width:487px;height:45px;background:#ffffff;"></div>
<div class="a" style="left:1086px;top:1191px;width:83px;height:45px;background:#ffffff;"></div>
<div class="a" style="left:606.0px;top:1201.0px;font-size:26px;line-height:26px;color:#111;transform:scaleX(0.9766);transform-origin:0 0;-webkit-text-stroke:0.9px #111;">Relay Team</div>
<div class="a" style="left:1121.0px;top:1203.1px;font-size:23.5px;line-height:23.5px;color:#111;font-style:italic;">0</div>
<div class="a" style="left:597px;top:1238px;width:487px;height:45px;background:#eeeeee;"></div>
<div class="a" style="left:1086px;top:1238px;width:83px;height:45px;background:#eeeeee;"></div>
<div class="a" style="left:606.0px;top:1248.0px;font-size:26px;line-height:26px;color:#111;transform:scaleX(0.9841);transform-origin:0 0;-webkit-text-stroke:0.9px #111;">Relay Captain</div>
<div class="a" style="left:1121.0px;top:1250.1px;font-size:23.5px;line-height:23.5px;color:#111;font-style:italic;">0</div>
<div class="a" style="left:597px;top:1285px;width:487px;height:45px;background:#ffffff;"></div>
<div class="a" style="left:1086px;top:1285px;width:83px;height:45px;background:#ffffff;"></div>
<div class="a" style="left:606.0px;top:1295.0px;font-size:26px;line-height:26px;color:#111;transform:scaleX(0.9705);transform-origin:0 0;-webkit-text-stroke:0.9px #111;">Relay Team Member</div>
<div class="a" style="left:1121.0px;top:1297.1px;font-size:23.5px;line-height:23.5px;color:#111;font-style:italic;">0</div>
<div class="a" style="left:597px;top:1332px;width:487px;height:45px;background:#eeeeee;"></div>
<div class="a" style="left:1086px;top:1332px;width:83px;height:45px;background:#eeeeee;"></div>
<div class="a" style="left:606.0px;top:1342.0px;font-size:26px;line-height:26px;color:#111;transform:scaleX(1.0545);transform-origin:0 0;-webkit-text-stroke:0.9px #111;">Total:</div>
<div class="a" style="left:1114.4px;top:1344.1px;font-size:23.5px;line-height:23.5px;color:#111;font-style:italic;">99</div>
<div class="a" style="left:683px;top:1419px;width:400px;height:60px;background:#1a42b9;border-radius:7px;"></div>
<div class="a" style="left:770.0px;top:1441.8px;font-size:25px;line-height:25px;color:#fff;transform:scaleX(0.9009);transform-origin:0 0;">VIEW PARTICIPANTS</div>
<div class="a" style="left:1237px;top:486px;width:1504px;height:719px;background:#fff;border-radius:7px;box-shadow:0 1px 3px rgba(0,0,0,0.16);"></div>
<div class="a" style="left:1237px;top:486px;width:1504px;height:66px;background:#1a42b9;border-radius:7px 7px 0 0;"></div>
<div class="a" style="left:1257.0px;top:504.8px;font-size:27px;line-height:27px;color:#fff;transform:scaleX(1.0571);transform-origin:0 0;-webkit-text-stroke:0.9px #fff;">Registration Numbers</div>
<div class="a" style="left:2651.7px;top:505.6px;font-size:20.5px;line-height:20.5px;color:#fff;transform:scaleX(1.0853);transform-origin:0 0;-webkit-text-stroke:0.7px #fff;">Export</div>
<div class="a" style="left:1575px;top:592px;width:303px;height:43px;background:#fff;border:2px solid #c4c4c4;border-radius:7px;"></div>
<div class="a" style="left:1890px;top:592px;width:302px;height:43px;background:#fff;border:2px solid #c4c4c4;border-radius:7px;"></div>
<div class="a" style="left:1586.0px;top:603.3px;font-size:24.5px;line-height:24.5px;color:#555;transform:scaleX(0.9978);transform-origin:0 0;">2018-12-04 00:00:00</div>
<div class="a" style="left:1900.0px;top:603.3px;font-size:24.5px;line-height:24.5px;color:#555;transform:scaleX(0.9978);transform-origin:0 0;">2023-06-22 23:59:59</div>
<svg style="left:1819px;top:597px" width="28" height="30" viewBox="0 0 28 30"><rect x="1" y="4" width="26" height="25" fill="#e6e6e6" stroke="#8a8a8a" stroke-width="2"/><rect x="1" y="4" width="26" height="7" fill="#9a9a9a"/><rect x="6" y="0" width="3" height="7" fill="#666"/><rect x="19" y="0" width="3" height="7" fill="#666"/><path d="M6 15 H16 V20 H10 V25 H22" fill="none" stroke="#777" stroke-width="2"/></svg>
<svg style="left:2133px;top:597px" width="28" height="30" viewBox="0 0 28 30"><rect x="1" y="4" width="26" height="25" fill="#e6e6e6" stroke="#8a8a8a" stroke-width="2"/><rect x="1" y="4" width="26" height="7" fill="#9a9a9a"/><rect x="6" y="0" width="3" height="7" fill="#666"/><rect x="19" y="0" width="3" height="7" fill="#666"/><path d="M6 15 H16 V20 H10 V25 H22" fill="none" stroke="#777" stroke-width="2"/></svg>
<div class="a" style="left:2203px;top:592px;width:200px;height:40px;background:#1a42b9;border-radius:7px;"></div>
<div class="a" style="left:2258.0px;top:601.3px;font-size:24.5px;line-height:24.5px;color:#fff;transform:scaleX(0.9615);transform-origin:0 0;">SUBMIT</div>
<div class="a" style="left:1831.0px;top:662.9px;font-size:32px;line-height:32px;color:#111;transform:scaleX(1.0650);transform-origin:0 0;">Total Participants:</div>
<div class="a" style="left:2108.4px;top:662.9px;font-size:32px;line-height:32px;color:#111;font-weight:bold;transform:scaleX(1.0707);transform-origin:0 0;">99</div>
<div class="a" style="left:1576.0px;top:725.9px;font-size:32px;line-height:32px;color:#111;transform:scaleX(1.0427);transform-origin:0 0;">Online Registrations:</div>
<div class="a" style="left:1894.0px;top:725.9px;font-size:32px;line-height:32px;color:#111;font-weight:bold;transform:scaleX(1.0398);transform-origin:0 0;">79</div>
<div class="a" style="left:1960.0px;top:725.9px;font-size:32px;line-height:32px;color:#111;transform:scaleX(1.0415);transform-origin:0 0;">Offline/Cash Registrations:</div>
<div class="a" style="left:2365.0px;top:725.9px;font-size:32px;line-height:32px;color:#111;font-weight:bold;transform:scaleX(1.0398);transform-origin:0 0;">20</div>
<svg style="left:0;top:0" width="2880" height="1646"><rect x="1473" y="839" width="2" height="246" fill="#ebebeb"/><rect x="1539" y="839" width="2" height="246" fill="#ebebeb"/><rect x="1605" y="839" width="2" height="246" fill="#ebebeb"/><rect x="1737" y="839" width="2" height="246" fill="#ebebeb"/><rect x="1803" y="839" width="2" height="246" fill="#ebebeb"/><rect x="1869" y="839" width="2" height="246" fill="#ebebeb"/><rect x="2001" y="839" width="2" height="246" fill="#ebebeb"/><rect x="2067" y="839" width="2" height="246" fill="#ebebeb"/><rect x="2133" y="839" width="2" height="246" fill="#ebebeb"/><rect x="2265" y="839" width="2" height="246" fill="#ebebeb"/><rect x="2331" y="839" width="2" height="246" fill="#ebebeb"/><rect x="2397" y="839" width="2" height="246" fill="#ebebeb"/><rect x="2529" y="839" width="2" height="246" fill="#ebebeb"/><rect x="1407" y="839" width="2" height="246" fill="#cccccc"/><rect x="1671" y="839" width="2" height="246" fill="#cccccc"/><rect x="1936" y="839" width="2" height="246" fill="#cccccc"/><rect x="2201" y="839" width="2" height="246" fill="#cccccc"/><rect x="2465" y="839" width="2" height="246" fill="#cccccc"/><rect x="1387" y="838.0" width="1204" height="2" fill="#cccccc"/><rect x="1387" y="920.0" width="1204" height="2" fill="#cccccc"/><rect x="1387" y="1002.0" width="1204" height="2" fill="#cccccc"/><polygon points="1395,1085 1395,1019.4 1423.3,1052.2 1449.2,1052.2 1454,1052.2 1541,1052.2 1597,1019.4 1598.3,1052.2 1609.8,1052.2 1622.3,1052.2 1634.8,1052.2 1646.3,1052.2 1657,1052.2 1660,1052.2 1677,1052.2 1691,986.6 1692,953.8 1693,1052.2 1705,1052.2 1708.8,1052.2 1717.5,986.6 1723.3,986.6 1729.4,855.4 1739.6,1052.2 1793,1019.4 1890,1052.2 1894,1052.2 1929.2,1052.2 1990.5,1052.2 1993,1052.2 2009.8,1052.2 2022,1052.2 2031.4,1052.2 2051.2,1052.2 2058,1052.2 2061,986.6 2063,1052.2 2077.6,1052.2 2094,986.6 2139.6,1052.2 2153,1052.2 2241,1052.2 2246,1052.2 2263,1052.2 2273.7,1052.2 2285.4,986.6 2301,953.8 2331.6,1052.2 2336.5,1052.2 2339.8,888.2 2347.6,1052.2 2490.5,1052.2 2495.4,1052.2 2520,1052.2 2555.3,1019.4 2555.3,1085" fill="#1a42b9" fill-opacity="0.3"/><rect x="1387" y="1083.5" width="1204" height="3" fill="#333"/><polyline points="1395,1019.4 1423.3,1052.2 1449.2,1052.2 1454,1052.2 1541,1052.2 1597,1019.4 1598.3,1052.2 1609.8,1052.2 1622.3,1052.2 1634.8,1052.2 1646.3,1052.2 1657,1052.2 1660,1052.2 1677,1052.2 1691,986.6 1692,953.8 1693,1052.2 1705,1052.2 1708.8,1052.2 1717.5,986.6 1723.3,986.6 1729.4,855.4 1739.6,1052.2 1793,1019.4 1890,1052.2 1894,1052.2 1929.2,1052.2 1990.5,1052.2 1993,1052.2 2009.8,1052.2 2022,1052.2 2031.4,1052.2 2051.2,1052.2 2058,1052.2 2061,986.6 2063,1052.2 2077.6,1052.2 2094,986.6 2139.6,1052.2 2153,1052.2 2241,1052.2 2246,1052.2 2263,1052.2 2273.7,1052.2 2285.4,986.6 2301,953.8 2331.6,1052.2 2336.5,1052.2 2339.8,888.2 2347.6,1052.2 2490.5,1052.2 2495.4,1052.2 2520,1052.2 2555.3,1019.4" fill="none" stroke="#1a42b9" stroke-width="7" stroke-linejoin="round"/><circle cx="1395" cy="1019.4" r="9.3" fill="#1a42b9"/><circle cx="1423.3" cy="1052.2" r="9.3" fill="#1a42b9"/><circle cx="1449.2" cy="1052.2" r="9.3" fill="#1a42b9"/><circle cx="1454" cy="1052.2" r="9.3" fill="#1a42b9"/><circle cx="1541" cy="1052.2" r="9.3" fill="#1a42b9"/><circle cx="1597" cy="1019.4" r="9.3" fill="#1a42b9"/><circle cx="1598.3" cy="1052.2" r="9.3" fill="#1a42b9"/><circle cx="1609.8" cy="1052.2" r="9.3" fill="#1a42b9"/><circle cx="1622.3" cy="1052.2" r="9.3" fill="#1a42b9"/><circle cx="1634.8" cy="1052.2" r="9.3" fill="#1a42b9"/><circle cx="1646.3" cy="1052.2" r="9.3" fill="#1a42b9"/><circle cx="1657" cy="1052.2" r="9.3" fill="#1a42b9"/><circle cx="1660" cy="1052.2" r="9.3" fill="#1a42b9"/><circle cx="1677" cy="1052.2" r="9.3" fill="#1a42b9"/><circle cx="1691" cy="986.6" r="9.3" fill="#1a42b9"/><circle cx="1692" cy="953.8" r="9.3" fill="#1a42b9"/><circle cx="1693" cy="1052.2" r="9.3" fill="#1a42b9"/><circle cx="1705" cy="1052.2" r="9.3" fill="#1a42b9"/><circle cx="1708.8" cy="1052.2" r="9.3" fill="#1a42b9"/><circle cx="1717.5" cy="986.6" r="9.3" fill="#1a42b9"/><circle cx="1723.3" cy="986.6" r="9.3" fill="#1a42b9"/><circle cx="1729.4" cy="855.4" r="9.3" fill="#1a42b9"/><circle cx="1739.6" cy="1052.2" r="9.3" fill="#1a42b9"/><circle cx="1793" cy="1019.4" r="9.3" fill="#1a42b9"/><circle cx="1890" cy="1052.2" r="9.3" fill="#1a42b9"/><circle cx="1894" cy="1052.2" r="9.3" fill="#1a42b9"/><circle cx="1929.2" cy="1052.2" r="9.3" fill="#1a42b9"/><circle cx="1990.5" cy="1052.2" r="9.3" fill="#1a42b9"/><circle cx="1993" cy="1052.2" r="9.3" fill="#1a42b9"/><circle cx="2009.8" cy="1052.2" r="9.3" fill="#1a42b9"/><circle cx="2022" cy="1052.2" r="9.3" fill="#1a42b9"/><circle cx="2031.4" cy="1052.2" r="9.3" fill="#1a42b9"/><circle cx="2051.2" cy="1052.2" r="9.3" fill="#1a42b9"/><circle cx="2058" cy="1052.2" r="9.3" fill="#1a42b9"/><circle cx="2061" cy="986.6" r="9.3" fill="#1a42b9"/><circle cx="2063" cy="1052.2" r="9.3" fill="#1a42b9"/><circle cx="2077.6" cy="1052.2" r="9.3" fill="#1a42b9"/><circle cx="2094" cy="986.6" r="9.3" fill="#1a42b9"/><circle cx="2139.6" cy="1052.2" r="9.3" fill="#1a42b9"/><circle cx="2153" cy="1052.2" r="9.3" fill="#1a42b9"/><circle cx="2241" cy="1052.2" r="9.3" fill="#1a42b9"/><circle cx="2246" cy="1052.2" r="9.3" fill="#1a42b9"/><circle cx="2263" cy="1052.2" r="9.3" fill="#1a42b9"/><circle cx="2273.7" cy="1052.2" r="9.3" fill="#1a42b9"/><circle cx="2285.4" cy="986.6" r="9.3" fill="#1a42b9"/><circle cx="2301" cy="953.8" r="9.3" fill="#1a42b9"/><circle cx="2331.6" cy="1052.2" r="9.3" fill="#1a42b9"/><circle cx="2336.5" cy="1052.2" r="9.3" fill="#1a42b9"/><circle cx="2339.8" cy="888.2" r="9.3" fill="#1a42b9"/><circle cx="2347.6" cy="1052.2" r="9.3" fill="#1a42b9"/><circle cx="2490.5" cy="1052.2" r="9.3" fill="#1a42b9"/><circle cx="2495.4" cy="1052.2" r="9.3" fill="#1a42b9"/><circle cx="2520" cy="1052.2" r="9.3" fill="#1a42b9"/><circle cx="2555.3" cy="1019.4" r="9.3" fill="#1a42b9"/></svg>
<div class="a" style="left:1329.2px;top:827.5px;font-size:23px;line-height:23px;color:#444;transform:scaleX(1.0572);transform-origin:0 0;">7.5</div>
<div class="a" style="left:1329.2px;top:909.5px;font-size:23px;line-height:23px;color:#444;transform:scaleX(1.0572);transform-origin:0 0;">5.0</div>
<div class="a" style="left:1329.2px;top:991.5px;font-size:23px;line-height:23px;color:#444;transform:scaleX(1.0572);transform-origin:0 0;">2.5</div>
<div class="a" style="left:1329.2px;top:1073.5px;font-size:23px;line-height:23px;color:#444;transform:scaleX(1.0572);transform-origin:0 0;">0.0</div>
<div class="a" style="left:1379.9px;top:1100.5px;font-size:23px;line-height:23px;color:#444;">Jan 1</div>
<div class="a" style="left:1515.7px;top:1100.5px;font-size:23px;line-height:23px;color:#444;">Jul 1</div>
<div class="a" style="left:1643.9px;top:1100.5px;font-size:23px;line-height:23px;color:#444;">Jan 1</div>
<div class="a" style="left:1779.7px;top:1100.5px;font-size:23px;line-height:23px;color:#444;">Jul 1</div>
<div class="a" style="left:1908.9px;top:1100.5px;font-size:23px;line-height:23px;color:#444;">Jan 1</div>
<div class="a" style="left:2043.7px;top:1100.5px;font-size:23px;line-height:23px;color:#444;">Jul 1</div>
<div class="a" style="left:2173.9px;top:1100.5px;font-size:23px;line-height:23px;color:#444;">Jan 1</div>
<div class="a" style="left:2307.7px;top:1100.5px;font-size:23px;line-height:23px;color:#444;">Jul 1</div>
<div class="a" style="left:2437.9px;top:1100.5px;font-size:23px;line-height:23px;color:#444;">Jan 1</div>
<div class="a" style="left:1581.0px;top:1166.8px;font-size:25px;line-height:25px;color:#1a42b9;transform:scaleX(1.0345);transform-origin:0 0;">Today</div>
<div class="a" style="left:1691.0px;top:1166.8px;font-size:25px;line-height:25px;color:#1a42b9;transform:scaleX(1.0066);transform-origin:0 0;">Yesterday</div>
<div class="a" style="left:1842.5px;top:1166.8px;font-size:25px;line-height:25px;color:#1a42b9;transform:scaleX(0.9576);transform-origin:0 0;">7 Days</div>
<div class="a" style="left:1957.0px;top:1166.8px;font-size:25px;line-height:25px;color:#1a42b9;transform:scaleX(1.0271);transform-origin:0 0;">This Month</div>
<div class="a" style="left:2125.0px;top:1166.8px;font-size:25px;line-height:25px;color:#1a42b9;transform:scaleX(1.0269);transform-origin:0 0;">Last Month</div>
<div class="a" style="left:2292.0px;top:1166.8px;font-size:25px;line-height:25px;color:#1a42b9;transform:scaleX(0.9978);transform-origin:0 0;">This Year</div>
<div class="a" style="left:1668.5px;top:1176px;width:5px;height:5px;background:#111;border-radius:3px;"></div>
<div class="a" style="left:1820.1px;top:1176px;width:5px;height:5px;background:#111;border-radius:3px;"></div>
<div class="a" style="left:1935.5px;top:1176px;width:5px;height:5px;background:#111;border-radius:3px;"></div>
<div class="a" style="left:2101.5px;top:1176px;width:5px;height:5px;background:#111;border-radius:3px;"></div>
<div class="a" style="left:2269.5px;top:1176px;width:5px;height:5px;background:#111;border-radius:3px;"></div>
<div class="a" style="left:573px;top:1570px;width:2168px;height:60px;background:#1a42b9;border-radius:7px 7px 0 0;"></div>
<div class="a" style="left:593.0px;top:1588.3px;font-size:28px;line-height:28px;color:#fff;transform:scaleX(1.0078);transform-origin:0 0;-webkit-text-stroke:0.9px #fff;">Participant Density Map</div>
<div class="a" style="left:2738px;top:1504px;width:76px;height:76px;border-radius:38px;background:#1a42b9"></div>
<svg style="left:2756px;top:1521px" width="42" height="44" viewBox="0 0 42 44"><rect x="0" y="0" width="40" height="35" rx="16" fill="#fff"/><path d="M12 30 L14 41 L23 32Z" fill="#fff"/><path d="M16.3 15.2 C16.3 11.2 24.6 11 24.6 15.6 C24.6 18.6 20 19 20 21.8" fill="none" stroke="#2f6de6" stroke-width="3.4" stroke-linecap="round"/><circle cx="19.9" cy="25.9" r="2.4" fill="#2f6de6"/></svg>
<div class="a" style="left:467px;top:1616px;width:2383px;height:30px;background:#f9f9f9;border-top:2px solid #ededed;"></div>
<div class="a" style="left:700px;top:1624px;width:1801px;height:16px;background:#c1c1c1;border-radius:8px;"></div>
<div class="a" style="left:0px;top:1560px;width:436px;height:45px;background:linear-gradient(rgba(242,241,246,0),rgba(220,220,225,0.4));"></div>
<div class="a" style="left:352px;top:1545px;width:68px;height:68px;border-radius:34px;background:#1a42b9;box-shadow:0 0 10px rgba(26,66,185,0.45)"></div>
<svg style="left:379px;top:1570px" width="14" height="18"><polyline points="10,2 3.5,9 10,16" fill="none" stroke="#fff" stroke-width="3.6" stroke-linecap="round" stroke-linejoin="round"/></svg>
<div class="a" style="left:0px;top:1605px;width:997px;height:41px;background:#e2e2e6;border-top:2px solid #c4c4c8;border-right:2px solid #c4c4c8;border-radius:0 9px 0 0;"></div>
<div class="a" style="left:10.0px;top:1614.5px;font-size:23px;line-height:23px;color:#2b2e33;transform:scaleX(1.1208);transform-origin:0 0;">https://raceroster.com/dashboard/event-organizers/event/19978/adventure-advocates</div>
<div class="a" style="left:60px;top:1374px;width:316px;height:102px;background:transparent;border:4px solid #e8472d;"></div>
<div class="a" style="left:404px;top:1425px;width:168px;height:4px;background:#e8472d;"></div>
<svg style="left:380px;top:1412px" width="30" height="30"><polygon points="4,15 27,3.5 27,26.5" fill="#e8472d"/></svg>
</body></html>
